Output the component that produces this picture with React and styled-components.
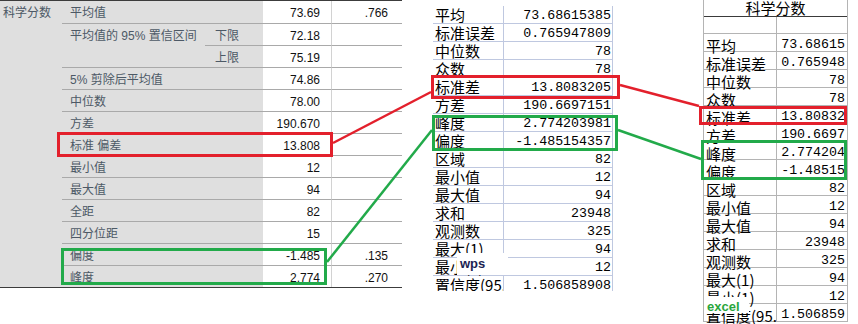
import React from "react";
import styled, { createGlobalStyle } from "styled-components";

const GlobalStyle = createGlobalStyle`
  html, body {
    margin: 0;
    padding: 0;
    background: #fff;
  }
  body {
    font-family: "Liberation Sans", "Noto Sans CJK SC", sans-serif;
  }
`;

const Page = styled.div`
  position: relative;
  width: 858px;
  height: 324px;
  overflow: hidden;
  display: flex;
  align-items: flex-start;
`;

/* ---------- SPSS ---------- */

const SpssGrid = styled.div`
  display: grid;
  grid-template-columns: 62px 143px 58px 69px 70px;
  grid-auto-rows: 22px;
  width: 402px;
  flex-shrink: 0;
  border-top: 1px solid #3c3c3c;
  border-bottom: 1px solid #3c3c3c;
  font-family: "Liberation Sans", "Noto Sans CJK SC", sans-serif;
  font-size: 12px;
`;

const SpssCell = styled.div`
  grid-row: ${(p) => p.$row} / span ${(p) => p.$rows || 1};
  grid-column: ${(p) => p.$col} / span ${(p) => p.$cols || 1};
  box-sizing: border-box;
  border-top: ${(p) => (p.$row > 1 && !p.$bare ? "1px solid #a9a9a9" : "none")};
  padding-top: 3px;
  line-height: 19px;
  white-space: nowrap;
  background: ${(p) => (p.$gray ? "#dfdfdf" : "#fff")};
  color: ${(p) => (p.$gray ? "#4d5966" : "#111")};
  text-align: ${(p) => (p.$gray ? "left" : "right")};
  padding-left: ${(p) => p.$padL || 0}px;
  padding-right: ${(p) => p.$padR || 0}px;
  border-right: ${(p) => (p.$divider ? "1px solid #d2d2d2" : "none")};
`;

const spssRows = [
  { label: "平均值", value: "73.69", err: ".766" },
  { label: "平均值的 95% 置信区间", sub: "下限", value: "72.18", span: 2 },
  { sub: "上限", value: "75.19" },
  { label: "5% 剪除后平均值", value: "74.86" },
  { label: "中位数", value: "78.00" },
  { label: "方差", value: "190.670" },
  { label: "标准 偏差", value: "13.808" },
  { label: "最小值", value: "12" },
  { label: "最大值", value: "94" },
  { label: "全距", value: "82" },
  { label: "四分位距", value: "15" },
  { label: "偏度", value: "-1.485", err: ".135" },
  { label: "峰度", value: "2.774", err: ".270" },
];

const SpssTable = () => (
  <SpssGrid>
    <SpssCell $row={1} $rows={13} $col={1} $gray $bare $padL={3}>
      科学分数
    </SpssCell>
    {spssRows.map((r, i) => {
      const row = i + 1;
      return (
        <React.Fragment key={row}>
          {r.label && !r.sub && (
            <SpssCell $row={row} $col={2} $cols={2} $gray $padL={8}>
              {r.label}
            </SpssCell>
          )}
          {r.label && r.sub && (
            <SpssCell $row={row} $rows={r.span} $col={2} $gray $padL={8}>
              {r.label}
            </SpssCell>
          )}
          {r.sub && (
            <SpssCell $row={row} $col={3} $gray $padL={10}>
              {r.sub}
            </SpssCell>
          )}
          <SpssCell $row={row} $col={4} $padR={11} $divider>
            {r.value}
          </SpssCell>
          <SpssCell $row={row} $col={5} $padR={14}>
            {r.err || ""}
          </SpssCell>
        </React.Fragment>
      );
    })}
  </SpssGrid>
);

/* ---------- WPS ---------- */

const WpsClip = styled.div`
  position: relative;
  flex-shrink: 0;
  margin-left: 31px;
  margin-top: 6px;
  width: 180px;
  height: 285px;
  overflow: hidden;
`;

const WpsGrid = styled.div`
  display: grid;
  grid-template-columns: 71px 109px;
  grid-auto-rows: 18px;
`;

const WpsCell = styled.div`
  box-sizing: border-box;
  border-bottom: 1px solid #bfc8e0;
  border-right: 1px solid #bfc8e0;
  white-space: nowrap;
  overflow-x: clip;
  color: #000;
  line-height: 17px;
  font-family: ${(p) =>
    p.$num ? '"Liberation Mono", monospace' : '"Noto Sans CJK SC", sans-serif'};
  font-size: ${(p) => (p.$num ? "13.3px" : "15px")};
  text-align: ${(p) => (p.$num ? "right" : "left")};
  padding: ${(p) => (p.$num ? "1px 1px 0 0" : "0 0 0 2px")};
`;

const WpsMark = styled.div`
  position: absolute;
  left: 24px;
  top: 247px;
  width: 51px;
  height: 22px;
  background: #fff;
  box-sizing: border-box;
  padding-left: 3px;
  font-family: "Liberation Sans", sans-serif;
  font-weight: 700;
  font-size: 13px;
  line-height: 22px;
  color: #1b2352;
`;

const wpsRows = [
  ["平均", "73.68615385"],
  ["标准误差", "0.765947809"],
  ["中位数", "78"],
  ["众数", "78"],
  ["标准差", "13.8083205"],
  ["方差", "190.6697151"],
  ["峰度", "2.774203981"],
  ["偏度", "-1.485154357"],
  ["区域", "82"],
  ["最小值", "12"],
  ["最大值", "94"],
  ["求和", "23948"],
  ["观测数", "325"],
  ["最大(1)", "94"],
  ["最小(1)", "12"],
  ["置信度(95.0%)", "1.506858908"],
];

const WpsTable = () => (
  <WpsClip>
    <WpsGrid>
      {wpsRows.map(([k, v]) => (
        <React.Fragment key={k}>
          <WpsCell>{k}</WpsCell>
          <WpsCell $num>{v}</WpsCell>
        </React.Fragment>
      ))}
    </WpsGrid>
    <WpsMark>wps</WpsMark>
  </WpsClip>
);

/* ---------- Excel ---------- */

const ExcelGrid = styled.div`
  position: relative;
  flex-shrink: 0;
  margin-left: 90px;
  display: grid;
  grid-template-columns: 73px 70px;
  grid-template-rows: 17px 17px;
  grid-auto-rows: 18px;
  border-left: 1px solid #b4b4b4;
  border-right: 1px solid #b4b4b4;
  color: #000;
`;

const ExcelHead = styled.div`
  grid-column: 1 / span 2;
  box-sizing: border-box;
  border-bottom: 1px solid #3a3a3a;
  text-align: center;
  font-family: "Noto Sans CJK SC", sans-serif;
  font-size: 15px;
  line-height: 16px;
`;

const ExcelCell = styled.div`
  box-sizing: border-box;
  border-bottom: 1px solid #b4b4b4;
  border-right: ${(p) => (p.$num ? "none" : "1px solid #b4b4b4")};
  white-space: nowrap;
  overflow-x: clip;
  line-height: 18px;
  padding-top: ${(p) => (p.$num ? "2px" : "3px")};
  font-family: ${(p) =>
    p.$num ? '"Liberation Mono", monospace' : '"Noto Sans CJK SC", sans-serif'};
  font-size: ${(p) => (p.$num ? "13.3px" : "15px")};
  text-align: ${(p) => (p.$num ? "right" : "left")};
  padding-left: ${(p) => (p.$num ? 0 : 2)}px;
  padding-right: ${(p) => (p.$num ? 2 : 0)}px;
`;

const ExcelMark = styled.div`
  position: absolute;
  left: 0;
  top: 297px;
  width: 45px;
  height: 16px;
  box-sizing: border-box;
  padding: 3px 0 0 3px;
  background: #fff;
  font-family: "Liberation Sans", sans-serif;
  font-weight: 700;
  font-size: 13px;
  line-height: 14px;
  color: #2aa63c;
`;

const excelRows = [
  ["平均", "73.68615"],
  ["标准误差", "0.765948"],
  ["中位数", "78"],
  ["众数", "78"],
  ["标准差", "13.80832"],
  ["方差", "190.6697"],
  ["峰度", "2.774204"],
  ["偏度", "-1.48515"],
  ["区域", "82"],
  ["最小值", "12"],
  ["最大值", "94"],
  ["求和", "23948"],
  ["观测数", "325"],
  ["最大(1)", "94"],
  ["最小(1)", "12"],
  ["置信度(95.0%)", "1.506859"],
];

const ExcelTable = () => (
  <ExcelGrid>
    <ExcelHead>科学分数</ExcelHead>
    <ExcelCell />
    <ExcelCell $num />
    {excelRows.map(([k, v]) => (
      <React.Fragment key={k}>
        <ExcelCell>{k}</ExcelCell>
        <ExcelCell $num>{v}</ExcelCell>
      </React.Fragment>
    ))}
    <ExcelMark>excel</ExcelMark>
  </ExcelGrid>
);

/* ---------- annotations ---------- */

const Annotations = styled.svg`
  position: absolute;
  left: 0;
  top: 0;
  pointer-events: none;
  fill: none;
`;

const RED = "#e3202c";
const GREEN = "#22aa4a";

export default function App() {
  return (
    <>
      <GlobalStyle />
      <Page>
        <SpssTable />
        <WpsTable />
        <ExcelTable />
        <Annotations width="858" height="324" viewBox="0 0 858 324">
          <g stroke={RED} strokeWidth="3">
            <rect x="58.5" y="133.5" width="273" height="22" />
            <rect x="432.5" y="76.5" width="186" height="21" />
            <rect x="700.5" y="107.5" width="145" height="16" />
          </g>
          <g stroke={RED} strokeWidth="2.5">
            <line x1="333" y1="143" x2="431" y2="92" />
            <line x1="620" y1="85" x2="699" y2="106" />
          </g>
          <g stroke={GREEN} strokeWidth="3">
            <rect x="62.5" y="249.5" width="263" height="34" />
            <rect x="433.5" y="116.5" width="183" height="33" />
            <rect x="702.5" y="141.5" width="143" height="37" />
          </g>
          <g stroke={GREEN} strokeWidth="2.5">
            <line x1="327" y1="262" x2="432" y2="130" />
            <line x1="618" y1="130" x2="701" y2="159" />
          </g>
        </Annotations>
      </Page>
    </>
  );
}
